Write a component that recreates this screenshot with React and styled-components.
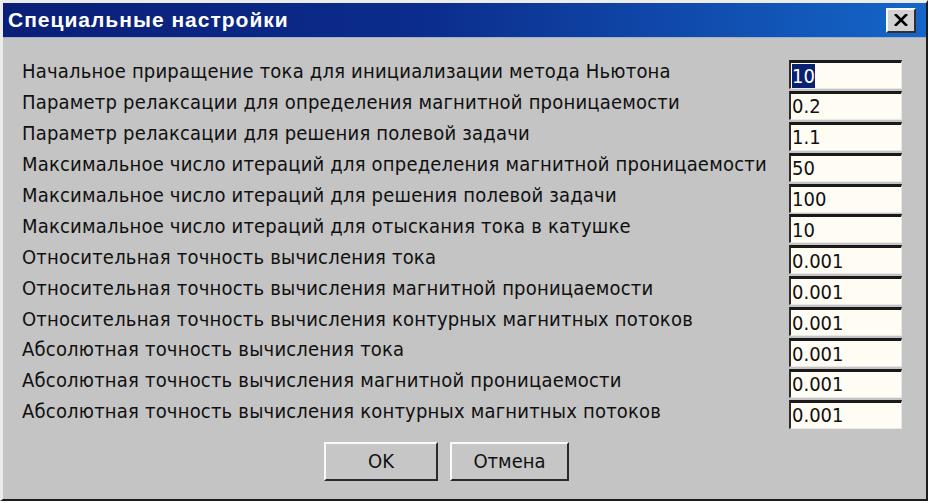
import React from 'react'
import styled, { createGlobalStyle } from 'styled-components'

const GlobalStyle = createGlobalStyle`
  html, body {
    margin: 0;
    padding: 0;
    background: #ffffff;
  }
  body {
    font-family: "DejaVu Sans Condensed", "Liberation Sans", sans-serif;
  }
`

const params = [
  { label: 'Начальное приращение тока для инициализации метода Ньютона', value: '10', selected: true },
  { label: 'Параметр релаксации для определения магнитной проницаемости', value: '0.2' },
  { label: 'Параметр релаксации для решения полевой задачи', value: '1.1' },
  { label: 'Максимальное число итераций для определения магнитной проницаемости', value: '50' },
  { label: 'Максимальное число итераций для решения полевой задачи', value: '100' },
  { label: 'Максимальное число итераций для отыскания тока в катушке', value: '10' },
  { label: 'Относительная точность вычисления тока', value: '0.001' },
  { label: 'Относительная точность вычисления магнитной проницаемости', value: '0.001' },
  { label: 'Относительная точность вычисления контурных магнитных потоков', value: '0.001' },
  { label: 'Абсолютная точность вычисления тока', value: '0.001' },
  { label: 'Абсолютная точность вычисления магнитной проницаемости', value: '0.001' },
  { label: 'Абсолютная точность вычисления контурных магнитных потоков', value: '0.001' }
]

export default function App() {
  return (
    <>
      <GlobalStyle />
      <Window>
        <TitleBar>
          <Title>Специальные настройки</Title>
          <CloseButton>
            <svg width="14" height="12" viewBox="0 0 14 12">
              <path d="M1 0 L13 12 M13 0 L1 12" stroke="#000" strokeWidth="2.6" />
            </svg>
          </CloseButton>
        </TitleBar>

        <Body>
          <Grid>
            {params.map((p, i) => (
              <React.Fragment key={i}>
                <Label>{p.label}</Label>
                <Field>
                  {p.selected ? <Selected>{p.value}</Selected> : p.value}
                </Field>
              </React.Fragment>
            ))}
          </Grid>

          <Buttons>
            <Button $width={114}>OK</Button>
            <Button $width={119}>Отмена</Button>
          </Buttons>
        </Body>
      </Window>
    </>
  )
}

const Window = styled.div`
  box-sizing: border-box;
  width: 928px;
  height: 501px;
  background: #c4c4c4;
  border-top: 3px solid #ececec;
  border-left: 3px solid #ececec;
  border-right: 2px solid #1c1c1c;
  border-bottom: 2px solid #1c1c1c;
  display: flex;
  flex-direction: column;
`

const TitleBar = styled.div`
  height: 34px;
  flex-shrink: 0;
  display: flex;
  align-items: center;
  justify-content: space-between;
  padding: 0 10px 0 5px;
  background: linear-gradient(to right, #0a1f78 0%, #0b2c8c 45%, #1466c8 100%);
  border-bottom: 1px solid #9fb0d0;
`

const Title = styled.div`
  color: #ffffff;
  font-family: "Liberation Sans", Arial, sans-serif;
  font-weight: bold;
  font-size: 21px;
  letter-spacing: 1px;
`

const CloseButton = styled.div`
  box-sizing: border-box;
  width: 30px;
  height: 25px;
  background: #d2d2d2;
  border-top: 2px solid #f8f8f8;
  border-left: 2px solid #f8f8f8;
  border-right: 2px solid #303030;
  border-bottom: 2px solid #303030;
  display: flex;
  align-items: center;
  justify-content: center;
`

const Body = styled.div`
  flex: 1;
  display: flex;
  flex-direction: column;
  padding: 22px 24px 0 19px;
`

const Grid = styled.div`
  display: grid;
  grid-template-columns: minmax(0, 1fr) 113px;
  grid-auto-rows: 30.9px;
  column-gap: 10px;
`

const Label = styled.div`
  display: flex;
  align-items: center;
  padding-bottom: 8px;
  font-size: 20px;
  letter-spacing: 0.2px;
  color: #101010;
  white-space: nowrap;
`

const Field = styled.div`
  box-sizing: border-box;
  height: 29px;
  background: #fffcf4;
  border-top: 3px solid #1a1a1a;
  border-left: 2px solid #2a2a2a;
  border-right: 1px solid #e8e8e8;
  border-bottom: 1px solid #e8e8e8;
  padding: 0 0 0 1px;
  display: flex;
  align-items: center;
  font-size: 20px;
  color: #101010;
`

const Selected = styled.span`
  background: #0a2070;
  color: #ffffff;
`

const Buttons = styled.div`
  display: flex;
  justify-content: center;
  gap: 12px;
  margin-top: 11px;
  padding-right: 31px;
`

const Button = styled.div`
  box-sizing: border-box;
  width: ${p => p.$width}px;
  height: 39px;
  background: #c6c6c6;
  border-top: 2px solid #fafafa;
  border-left: 2px solid #fafafa;
  border-right: 2px solid #2a2a2a;
  border-bottom: 2px solid #2a2a2a;
  display: flex;
  align-items: center;
  justify-content: center;
  font-size: 20px;
  color: #101010;
`
